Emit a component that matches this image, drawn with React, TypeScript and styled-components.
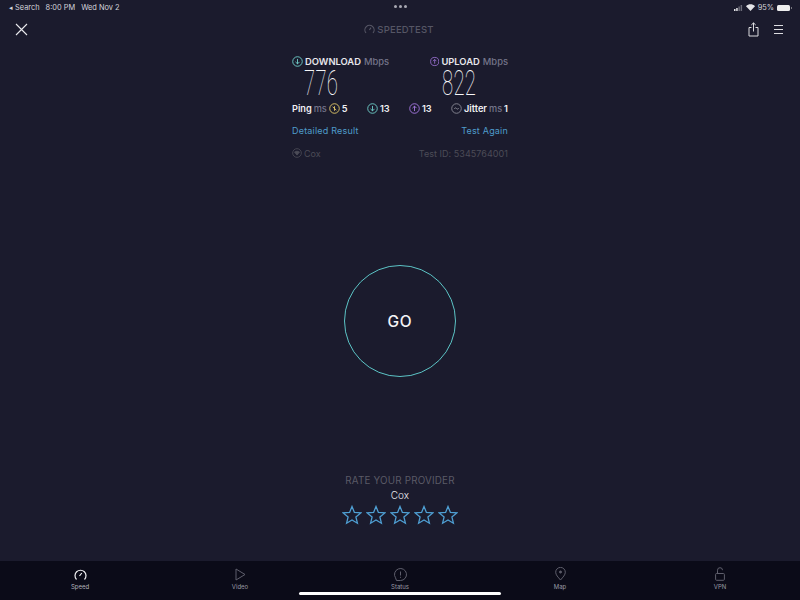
import React from "react";
import styled, { createGlobalStyle } from "styled-components";

const Global = createGlobalStyle`
  html, body { margin: 0; padding: 0; background: #1b1b2d; }
  * { box-sizing: border-box; }
`;

const Page = styled.div`
  width: 800px; height: 600px; position: relative; overflow: hidden;
  display: flex; flex-direction: column;
  background: #1b1b2d; color: #fff;
  font-family: Inter, "Liberation Sans", sans-serif;
`;
const StatusBar = styled.div`
  height: 15px; padding: 0 10px 0 9px; flex: none; position: relative;
  display: flex; align-items: center; justify-content: space-between;
  font-size: 7.4px; color: #d4d4da;
`;
const StatusGroup = styled.div<{ $gap: number }>`
  display: flex; align-items: center; gap: ${p => p.$gap}px;
`;
const Dots = styled.div`
  position: absolute; left: 394px; top: 5px; display: flex; gap: 2px;
`;
const Dot = styled.span`
  width: 3px; height: 3px; border-radius: 50%; background: #a9a9b2;
`;
const Battery = styled.span`
  width: 13px; height: 6px; border-radius: 1.5px; background: #eee; display: block;
  position: relative;
  &::after {
    content: ""; position: absolute; left: 13.5px; top: 2px; width: 1px; height: 2px; background: #77777f;
  }
`;
const Header = styled.div`
  height: 28px; padding: 0 17px 0 15px; flex: none;
  display: grid; grid-template-columns: 1fr auto 1fr; align-items: center;
`;
const Brand = styled.div`
  display: flex; align-items: center; gap: 2px;
  font-size: 9.5px; font-weight: 500; letter-spacing: .2px; color: #565665;
`;
const HeaderActions = styled.div`
  display: flex; justify-content: flex-end; align-items: center; gap: 15px;
`;
const Results = styled.section`
  width: 216px; margin: 11px auto 0; flex: none;
`;
const SpeedColumns = styled.div`
  display: grid; grid-template-columns: 138px 78px;
`;
const SpeedLabel = styled.div`
  height: 14px; display: flex; align-items: center; gap: 2px;
  font-size: 9.4px; font-weight: 600; color: #e8e8ec; white-space: nowrap;
`;
const Unit = styled.span`
  color: #75758a; font-weight: 500; margin-left: 1px;
`;
const BigNumber = styled.div`
  height: 26px; margin: 3px 0 0 12px; font-family: Roboto, sans-serif; font-weight: 100;
  font-size: 35px; line-height: 26px; color: #f6f6f8;
  transform: scaleX(.58); transform-origin: left center; letter-spacing: .5px;
`;
const StatsRow = styled.div`
  margin-top: 4px; height: 14px; display: flex; justify-content: space-between; align-items: center;
  font-size: 9.2px; font-weight: 600; color: #f0f0f3;
`;
const Stat = styled.div`
  display: flex; align-items: center; gap: 2px; white-space: nowrap;
`;
const StatUnit = styled.span`
  color: #75758a; font-weight: 500;
`;
const LinksRow = styled.div`
  margin-top: 8px; height: 14px; display: flex; justify-content: space-between; align-items: center;
  font-size: 9px; color: #4f9bcb; letter-spacing: .2px;
`;
const ProviderRow = styled.div`
  margin-top: 9px; height: 14px; display: flex; justify-content: space-between; align-items: center;
  font-size: 9px; color: #4c4c57; letter-spacing: .05px;
`;
const GoButton = styled.div`
  width: 112px; height: 112px; margin: 105px auto 0; flex: none; border-radius: 50%;
  border: 1.5px solid #5cc4c6; display: flex; align-items: center; justify-content: center;
  font-size: 15.5px; font-weight: 500; letter-spacing: .8px; color: #f4f4f6;
`;
const Rate = styled.section`
  margin-top: 97px; flex: none; display: flex; flex-direction: column; align-items: center;
`;
const RateTitle = styled.div`
  height: 14px; line-height: 14px; font-size: 9.8px; letter-spacing: .2px; color: #5a5a66;
`;
const RateProvider = styled.div`
  height: 14px; line-height: 14px; font-size: 10px; font-weight: 300; color: #e8e8ec;
`;
const Stars = styled.div`
  margin-top: 3px; display: flex; gap: 4px;
`;
const TabBar = styled.nav`
  margin-top: auto; height: 39px; flex: none; background: #0b0b18;
  display: grid; grid-template-columns: repeat(5, 160px);
`;
const Tab = styled.div<{ $active?: boolean }>`
  padding-top: 6px; display: flex; flex-direction: column; align-items: center; gap: 2px;
  font-size: 6px; color: ${p => (p.$active ? "#b4b4bc" : "#9a9aa4")};
`;
const TabIcon = styled.div`
  height: 14px; display: flex; align-items: center;
`;
const HomeIndicator = styled.div`
  position: absolute; left: 299px; top: 592px; width: 202px; height: 3px; border-radius: 2px; background: #fff;
`;

const Circle = ({ c, children, size = 11 }: { c: string; children?: React.ReactNode; size?: number }) => (
  <svg width={size} height={size} viewBox="0 0 12 12" fill="none" stroke={c} strokeWidth="1">
    <circle cx="6" cy="6" r="5.2" />
    {children}
  </svg>
);
const Down = ({ c }: { c: string }) => (
  <Circle c={c}><path d="M6 3.2v5.4M3.8 6.4 6 8.6l2.2-2.2" /></Circle>
);
const Up = ({ c }: { c: string }) => (
  <Circle c={c}><path d="M6 8.8V3.4M3.8 5.6 6 3.4l2.2 2.2" /></Circle>
);
const Star = () => (
  <svg width="20" height="20" viewBox="0 0 20 20" fill="none" stroke="#4f9fd3" strokeWidth="1.3" strokeLinejoin="miter">
    <path d="M10 1.5l2.4 5.9 6.4.5-4.9 4.1 1.5 6.2L10 15l-5.4 3.2 1.5-6.2-4.9-4.1 6.4-.5z" />
  </svg>
);

export default function App() {
  return (
    <Page>
      <Global />
      <StatusBar>
        <StatusGroup $gap={6}>
          <span>◂ Search</span><span>8:00 PM</span><span>Wed Nov 2</span>
        </StatusGroup>
        <Dots><Dot /><Dot /><Dot /></Dots>
        <StatusGroup $gap={3}>
          <svg width="9" height="6" viewBox="0 0 9 6" fill="#e4e4e8">
            <rect x="0" y="4" width="1.5" height="2" /><rect x="2.2" y="3" width="1.5" height="3" /><rect x="4.4" y="1.5" width="1.5" height="4.5" opacity=".4" /><rect x="6.6" y="0" width="1.5" height="6" opacity=".4" />
          </svg>
          <svg width="9" height="7" viewBox="0 0 9 7" fill="#e4e4e8">
            <path d="M0 2.2C2.5-.4 6.5-.4 9 2.2L4.5 7z" />
          </svg>
          <span>95%</span>
          <Battery />
        </StatusGroup>
      </StatusBar>
      <Header>
        <svg width="13" height="13" viewBox="0 0 13 13" stroke="#eaeaee" strokeWidth="1.1"><path d="M1 1l11 11M12 1 1 12" /></svg>
        <Brand>
          <svg width="11" height="10" viewBox="0 0 11 10" fill="none" stroke="#565665" strokeWidth="1.1">
            <path d="M2 9A4.6 4.6 0 1 1 9 9M5.4 6l1.6-2.4" />
          </svg>
          SPEEDTEST
        </Brand>
        <HeaderActions>
          <svg width="11" height="15" viewBox="0 0 11 15" fill="none" stroke="#dcdce0" strokeWidth="1">
            <path d="M3.5 5.5H1v8.5h9V5.5H7.5M5.5 9.5V1M3.3 3 5.5 .9 7.7 3" />
          </svg>
          <svg width="9" height="9" viewBox="0 0 9 9" stroke="#dcdce0" strokeWidth="1"><path d="M0 .5h9M0 4.5h9M0 8.5h9" /></svg>
        </HeaderActions>
      </Header>
      <Results>
        <SpeedColumns>
          <div>
            <SpeedLabel><Down c="#6fcfc9" /> DOWNLOAD <Unit>Mbps</Unit></SpeedLabel>
            <BigNumber>776</BigNumber>
          </div>
          <div>
            <SpeedLabel><Up c="#a678e2" /> UPLOAD <Unit>Mbps</Unit></SpeedLabel>
            <BigNumber>822</BigNumber>
          </div>
        </SpeedColumns>
        <StatsRow>
          <Stat>Ping <StatUnit>ms</StatUnit> <Circle c="#e3c868"><path d="M4 4.2 8 7.8M6 3.5v5" /></Circle> 5</Stat>
          <Stat><Down c="#6fcfc9" /> 13</Stat>
          <Stat><Up c="#a678e2" /> 13</Stat>
          <Stat><Circle c="#8a8a96"><path d="M3.5 6.5C4.5 5 5.5 5 6 6s1.5 1 2.5-.5" /></Circle> Jitter <StatUnit>ms</StatUnit> 1</Stat>
        </StatsRow>
        <LinksRow><span>Detailed Result</span><span>Test Again</span></LinksRow>
        <ProviderRow>
          <Stat>
            <svg width="10" height="10" viewBox="0 0 12 12" fill="none" stroke="#4c4c57"><circle cx="6" cy="6" r="5.2" /><path d="M3 4.8c1.8-1.2 4.2-1.2 6 0L6 8.5z" fill="#4c4c57" /></svg>
            Cox
          </Stat>
          <span>Test ID: 5345764001</span>
        </ProviderRow>
      </Results>
      <GoButton>GO</GoButton>
      <Rate>
        <RateTitle>RATE YOUR PROVIDER</RateTitle>
        <RateProvider>Cox</RateProvider>
        <Stars><Star /><Star /><Star /><Star /><Star /></Stars>
      </Rate>
      <TabBar>
        <Tab $active>
          <TabIcon>
            <svg width="13" height="13" viewBox="0 0 13 13" fill="none" stroke="#f2f2f4" strokeWidth="1.2"><path d="M2.5 11.5A5.5 5.5 0 1 1 10.5 11.5M5.5 8 7.8 5" /></svg>
          </TabIcon>
          Speed
        </Tab>
        <Tab>
          <TabIcon>
            <svg width="11" height="13" viewBox="0 0 11 13" fill="none" stroke="#5f5f6c"><path d="M1 1v11l9-5.5z" /></svg>
          </TabIcon>
          Video
        </Tab>
        <Tab>
          <TabIcon>
            <svg width="13" height="13" viewBox="0 0 13 13" fill="none" stroke="#5f5f6c"><path d="M2.5 12.5h4a6 6 0 1 0-5-2.7z" /><path d="M6.5 3.5v4M6.5 8.8v1" /></svg>
          </TabIcon>
          Status
        </Tab>
        <Tab>
          <TabIcon>
            <svg width="11" height="14" viewBox="0 0 11 14" fill="none" stroke="#5f5f6c"><path d="M5.5 13C3 10 .7 8 .7 5.2a4.8 4.8 0 0 1 9.6 0C10.3 8 8 10 5.5 13z" /><circle cx="5.5" cy="5" r="1" fill="#5f5f6c" /></svg>
          </TabIcon>
          Map
        </Tab>
        <Tab>
          <TabIcon>
            <svg width="10" height="14" viewBox="0 0 10 14" fill="none" stroke="#5f5f6c"><rect x=".6" y="6.5" width="8.8" height="6.8" rx="1" /><path d="M2.5 6.5V3.2a2.5 2.5 0 0 1 5 0" /></svg>
          </TabIcon>
          VPN
        </Tab>
      </TabBar>
      <HomeIndicator />
    </Page>
  );
}
